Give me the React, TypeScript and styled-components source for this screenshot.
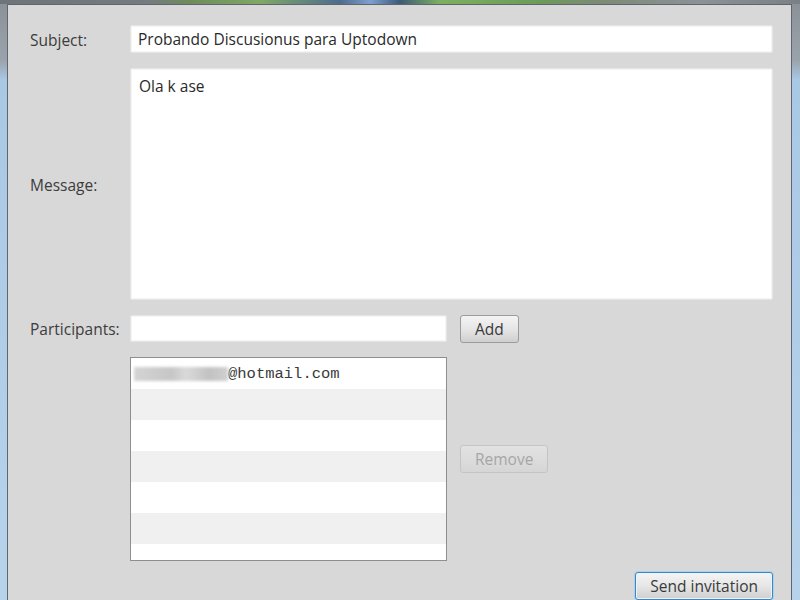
import styled, { createGlobalStyle } from 'styled-components'

const Global = createGlobalStyle`
  html, body {
    margin: 0;
    padding: 0;
    width: 800px;
    height: 600px;
    overflow: hidden;
    background: #d8d8d8;
  }
`

const Window = styled.div`
  width: 800px;
  height: 600px;
  box-sizing: border-box;
  display: flex;
  flex-direction: column;
  background: linear-gradient(180deg, #8a9098 0px, #9aa3ab 60px, #a9c8e4 80px, #b7d3ec 600px);
  padding: 0 8px 0 7px;
`

const TitleStrip = styled.div`
  height: 4px;
  margin: 0 -8px 0 -7px;
  background: linear-gradient(
    90deg,
    #6f747a 0px,
    #767b80 150px,
    #6d8c5a 190px,
    #7fa866 260px,
    #4f6c8d 340px,
    #7d9fd0 370px,
    #3e5a78 400px,
    #7cb060 440px,
    #6c9a5a 540px,
    #7c8a76 600px,
    #8c9298 700px,
    #7b8087 800px
  );
`

const Dialog = styled.div`
  flex: 1;
  background: #d8d8d8;
  border: 1px solid #5f666e;
  border-bottom: none;
  padding: 20px 18px 0 22px;
  display: grid;
  grid-template-columns: 100px 1fr;
  grid-template-rows: 28px 232px 27px 204px auto;
  row-gap: 15px;
  align-items: center;
  font-family: 'Open Sans', 'Noto Sans', sans-serif;
  font-size: 15.5px;
  color: #3c3c3c;
`

const Label = styled.label`
  padding-top: 1px;
`

const TextField = styled.div<{ $width?: number }>`
  height: 100%;
  width: ${({ $width }) => ($width ? `${$width}px` : 'auto')};
  box-sizing: border-box;
  background: #fff;
  border: 1px solid #e6e6e6;
  border-radius: 2px;
  box-shadow: inset 0 0 0 1px #f4f4f4;
  padding: 3px 7px;
  color: #2a2a2a;
  font-size: 15.5px;
  line-height: 20px;
`

const MessageArea = styled(TextField)`
  padding: 7px 8px;
  align-self: stretch;
`

const Row = styled.div`
  display: flex;
  align-items: center;
  gap: 13px;
  height: 100%;
`

const Button = styled.button<{ $disabled?: boolean; $focused?: boolean }>`
  font-family: inherit;
  font-size: 15.5px;
  height: 28px;
  padding: 0 14px;
  border-radius: 3px;
  border: 1px solid ${({ $disabled, $focused }) => ($focused ? '#3d86c0' : $disabled ? '#c4c4c4' : '#9c9c9c')};
  background: ${({ $disabled }) =>
    $disabled ? 'linear-gradient(#e2e2e2, #d6d6d6)' : 'linear-gradient(#f4f4f4 0%, #e6e6e6 50%, #cfcfcf 100%)'};
  color: ${({ $disabled }) => ($disabled ? '#a6a6a6' : '#3a3a3a')};
  box-shadow: ${({ $focused }) => ($focused ? '0 0 0 1px #a9d2f0, inset 0 0 0 1px #e9f4fc' : 'none')};
  line-height: 26px;
`

const ParticipantList = styled.div`
  width: 317px;
  height: 204px;
  box-sizing: border-box;
  border: 1px solid #8e8e8e;
  background: #fff;
  overflow: hidden;
`

const ListRow = styled.div<{ $alt: boolean }>`
  height: 31px;
  background: ${({ $alt }) => ($alt ? '#f0f0f0' : '#ffffff')};
  display: flex;
  align-items: center;
  padding-left: 3px;
`

const Blurred = styled.span`
  width: 94px;
  height: 14px;
  background: linear-gradient(90deg, #d4d4d4 0%, #c6c6c6 40%, #d9d9d9 55%, #c2c2c2 80%, #d0d0d0 100%);
  filter: blur(1.5px);
`

const Email = styled.span`
  font-family: 'Liberation Mono', 'DejaVu Sans Mono', monospace;
  font-size: 15.5px;
  color: #3a3a3a;
`

const Footer = styled.div`
  grid-column: 1 / 3;
  display: flex;
  justify-content: flex-end;
  align-self: start;
  margin-top: -4px;
`

export default function App() {
  const rows = [0, 1, 2, 3, 4, 5, 6]
  return (
    <>
      <Global />
      <Window>
        <TitleStrip />
        <Dialog>
          <Label>Subject:</Label>
          <TextField>Probando Discusionus para Uptodown</TextField>

          <Label>Message:</Label>
          <MessageArea>Ola k ase</MessageArea>

          <Label>Participants:</Label>
          <Row>
            <TextField $width={317} />
            <Button>Add</Button>
          </Row>

          <div />
          <Row>
            <ParticipantList>
              {rows.map((i) => (
                <ListRow key={i} $alt={i % 2 === 1}>
                  {i === 0 && (
                    <>
                      <Blurred />
                      <Email>@hotmail.com</Email>
                    </>
                  )}
                </ListRow>
              ))}
            </ParticipantList>
            <Button $disabled>Remove</Button>
          </Row>

          <Footer>
            <Button $focused>Send invitation</Button>
          </Footer>
        </Dialog>
      </Window>
    </>
  )
}
